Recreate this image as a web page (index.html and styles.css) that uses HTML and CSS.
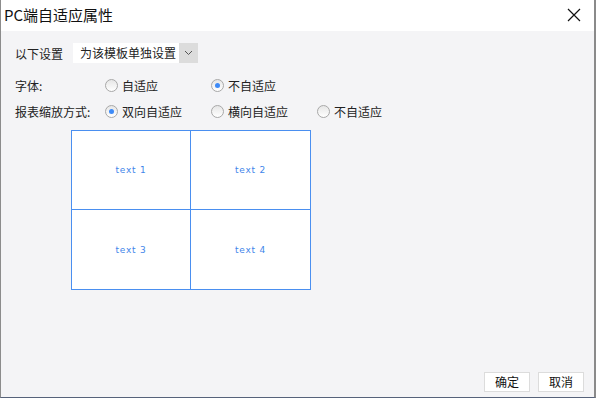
FILE: index.html
```html
<!DOCTYPE html>
<html lang="zh-CN">
  <head>
    <meta charset="UTF-8" />
    <title>PC端自适应属性</title>
    <link rel="stylesheet" href="styles.css">
  </head>
  <body>
    <div class="dialog">
      <div class="titlebar">
        <span class="title">PC端自适应属性</span>
        <span class="close">
          <svg width="14" height="14" viewBox="0 0 14 14">
            <path d="M1 1 L13 13 M13 1 L1 13" stroke="#111" stroke-width="1.2" fill="none" />
          </svg>
        </span>
      </div>
      <div class="body">
        <div class="row row-first">
          <span class="set-label">以下设置</span>
          <div class="select">
            <span class="select-text">为该模板单独设置</span>
            <span class="select-arrow">
              <svg width="9" height="6" viewBox="0 0 9 6">
                <path d="M1 1 L4.5 4.5 L8 1" stroke="#555" stroke-width="1" fill="none" />
              </svg>
            </span>
          </div>
        </div>
        <div class="row row-font">
          <span class="label">字体:</span>
          <label class="option"><span class="radio"></span>自适应</label>
          <label class="option"><span class="radio checked"></span>不自适应</label>
        </div>
        <div class="row row-scale">
          <span class="label">报表缩放方式:</span>
          <label class="option"><span class="radio checked"></span>双向自适应</label>
          <label class="option"><span class="radio"></span>横向自适应</label>
          <label class="option"><span class="radio"></span>不自适应</label>
        </div>
        <div class="preview">
          <div class="cell c1">text 1</div>
          <div class="cell c2">text 2</div>
          <div class="cell c3">text 3</div>
          <div class="cell c4">text 4</div>
        </div>
      </div>
      <div class="footer">
        <button class="btn">确定</button>
        <button class="btn">取消</button>
      </div>
    </div>
  </body>
</html>
```

FILE: styles.css
```css
* {
  margin: 0;
  padding: 0;
  box-sizing: border-box;
}
body {
  font-family: "Noto Sans CJK SC", "Noto Sans", sans-serif;
  font-size: 12px;
  color: #222;
  background: #f4f4f6;
}
.dialog {
  width: 596px;
  height: 398px;
  display: flex;
  flex-direction: column;
  background-color: #f4f4f6;
  border-left: 1px solid #8c8c8c;
  border-right: 2px solid #8a8a8a;
  border-bottom: 1px solid #56627a;
}
.titlebar {
  height: 31px;
  background-color: #fff;
  display: flex;
  align-items: center;
  justify-content: space-between;
  padding-left: 3px;
  padding-right: 13px;
}
.title {
  font-size: 15px;
  color: #111;
  line-height: 20px;
  margin-top: -2px;
}
.close {
  display: flex;
  margin-top: -1px;
}
.body {
  flex: 1;
  padding: 12px 0 0 14px;
}
.row {
  display: flex;
  align-items: center;
  height: 20px;
  white-space: nowrap;
}
.row-font {
  margin-top: 12px;
}
.row-scale {
  margin-top: 6px;
}
.set-label {
  width: 58px;
}
.select {
  display: flex;
  width: 125px;
  height: 20px;
  background-color: #fff;
}
.select-text {
  flex: 1;
  padding-left: 7px;
  line-height: 20px;
}
.select-arrow {
  width: 19px;
  background-color: #dcdcdc;
  display: flex;
  align-items: center;
  justify-content: center;
}
.label {
  width: 90px;
}
.option {
  width: 106px;
  display: flex;
  align-items: center;
}
.radio {
  width: 13px;
  height: 13px;
  border-radius: 50%;
  border: 1px solid #a8a8a8;
  background: linear-gradient(#e6e6e6, #ffffff);
  margin-right: 4px;
  position: relative;
}
.radio.checked::after {
  content: "";
  position: absolute;
  left: 3px;
  top: 3px;
  width: 5px;
  height: 5px;
  border-radius: 50%;
  background-color: #3d8af7;
}
.preview {
  margin: 9px 0 0 56px;
  width: 240px;
  height: 160px;
  display: grid;
  grid-template-columns: 119px 119px;
  grid-template-rows: 79px 79px;
  border: 1px solid #4a8ff0;
  background-color: #fff;
}
.cell {
  display: flex;
  align-items: center;
  justify-content: center;
  font-family: "DejaVu Sans", sans-serif;
  font-size: 9px;
  letter-spacing: 0.8px;
  color: #3f86ea;
}
.c1,
.c3 {
  border-right: 1px solid #4a8ff0;
}
.c1,
.c2 {
  border-bottom: 1px solid #4a8ff0;
}
.footer {
  display: flex;
  justify-content: flex-end;
  gap: 8px;
  padding: 0 10px 5px 0;
}
.btn {
  width: 46px;
  height: 20px;
  background-color: #fff;
  border: 1px solid #dcdcdc;
  font-family: "Noto Sans CJK SC", sans-serif;
  font-size: 12px;
  color: #111;
  line-height: 18px;
}
```
